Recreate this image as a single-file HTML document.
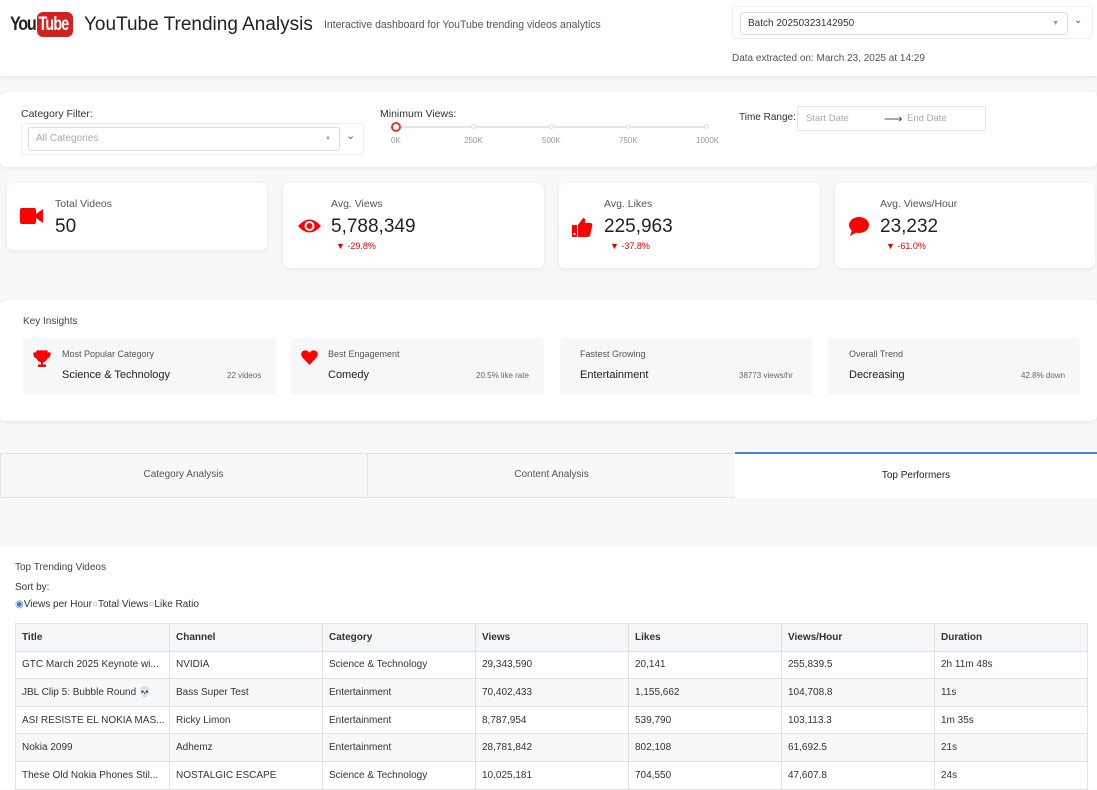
<!DOCTYPE html>
<html><head><meta charset="utf-8"><style>
*{box-sizing:border-box;margin:0;padding:0}
body{width:1097px;height:789px;overflow:hidden;background:#f8f8f8;font-family:"Liberation Sans",Arial,sans-serif;color:#333;position:relative}
.a{position:absolute}
.card{background:#fff;border-radius:6px;box-shadow:0 1px 4px rgba(0,0,0,.08)}
.lbl{font-size:10.5px;color:#555}
.big{font-size:19px;color:#222}
.dn{font-size:9px;color:#e00}
.ins{background:#f6f7f9;border-radius:3px}
table{border-collapse:collapse;font-size:10px;color:#333}
td,th{border:1px solid #e2e2e2;height:27.6px;padding:0 6px;text-align:left;font-weight:normal;white-space:nowrap;overflow:hidden}
th{background:#f5f6f8;font-weight:bold;color:#333}
</style></head><body>
<div class="a" style="left:0;top:0;width:1097px;height:76px;background:#fff;box-shadow:0 2px 4px rgba(0,0,0,.06)"></div>
<div class="a" style="left:10px;top:14px;font:bold 19px 'Liberation Sans',sans-serif;color:#222;letter-spacing:-1.5px;transform:scaleX(.85);transform-origin:left">You</div>
<div class="a" style="left:37px;top:12px;width:36px;height:25px;background:#d32020;border-radius:6px;overflow:hidden"><div style="color:#fff;font:bold 19px 'Liberation Sans',sans-serif;line-height:25px;letter-spacing:-1px;transform:scaleX(.75);transform-origin:left;padding-left:2px;white-space:nowrap">Tube</div></div>
<div class="a" style="left:84px;top:14px;font-size:19px;color:#222">YouTube Trending Analysis</div>
<div class="a" style="left:324px;top:19px;font-size:11px;color:#555;transform:scaleX(.95);transform-origin:left">Interactive dashboard for YouTube trending videos analytics</div>
<div class="a" style="left:732px;top:6px;width:361px;height:33px;border:1px solid #eee;border-radius:3px"></div>
<div class="a" style="left:740px;top:12px;width:328px;height:23px;border:1px solid #ddd;border-radius:3px;font-size:10px;line-height:21px;padding-left:7px;color:#333">Batch 20250323142950<span style="position:absolute;right:8px;color:#999;font-size:7px">▼</span></div>
<div class="a" style="left:1074px;top:15px;font-size:10px;color:#555">⌄</div>
<div class="a" style="left:732px;top:53px;font-size:10px;color:#555">Data extracted on: March 23, 2025 at 14:29</div>

<div class="a card" style="left:0;top:92px;width:1097px;height:75px;border-radius:6px"></div>
<div class="a" style="left:21px;top:108px;font-size:10.5px;color:#333">Category Filter:</div>
<div class="a" style="left:21px;top:123px;width:343px;height:32px;border:1px solid #eee;border-radius:3px"></div>
<div class="a" style="left:28px;top:127px;width:312px;height:24px;border:1px solid #ddd;border-radius:3px;font-size:10px;color:#aaa;line-height:22px;padding-left:7px">All Categories<span style="position:absolute;right:8px;font-size:6px;color:#999">▼</span></div>
<div class="a" style="left:346px;top:129px;font-size:11px;color:#555">⌄</div>
<div class="a" style="left:380px;top:108px;font-size:10.5px;color:#333">Minimum Views:</div>
<div class="a" style="left:396px;top:126px;width:311px;height:2px;background:#e6e6e6"></div>
<div class="a" style="left:391px;top:122px;width:10px;height:10px;border:2px solid #e33;border-radius:50%;background:#fff"></div>
<div class="a" style="left:471px;top:124px;width:5px;height:5px;border:1px solid #ddd;border-radius:50%;background:#fff"></div>
<div class="a" style="left:549px;top:124px;width:5px;height:5px;border:1px solid #ddd;border-radius:50%;background:#fff"></div>
<div class="a" style="left:626px;top:124px;width:5px;height:5px;border:1px solid #ddd;border-radius:50%;background:#fff"></div>
<div class="a" style="left:704px;top:124px;width:5px;height:5px;border:1px solid #ddd;border-radius:50%;background:#fff"></div>
<div class="a" style="left:391px;top:136px;font-size:8px;color:#999">0K</div>
<div class="a" style="left:464px;top:136px;font-size:8px;color:#999">250K</div>
<div class="a" style="left:542px;top:136px;font-size:8px;color:#999">500K</div>
<div class="a" style="left:619px;top:136px;font-size:8px;color:#999">750K</div>
<div class="a" style="left:696px;top:136px;font-size:8px;color:#999">1000K</div>
<div class="a" style="left:739px;top:112px;font-size:10px;color:#333">Time Range:</div>
<div class="a" style="left:797px;top:106px;width:189px;height:25px;border:1px solid #e4e4e4;border-radius:2px;font-size:9.5px;color:#aaa;line-height:23px;padding-left:8px;background:#fff">Start Date<span style="position:absolute;left:86px;color:#555;font-size:13px">⟶</span><span style="position:absolute;left:109px">End Date</span></div>

<div class="a card" style="left:7px;top:183px;width:260px;height:67px"></div>
<div class="a card" style="left:283px;top:183px;width:261px;height:85px"></div>
<div class="a card" style="left:559px;top:183px;width:261px;height:85px"></div>
<div class="a card" style="left:835px;top:183px;width:260px;height:85px"></div>
<svg class="a" style="left:20px;top:207px" width="23" height="18" viewBox="0 0 23 18"><rect x="0" y="1" width="16" height="16" rx="2" fill="#f00"/><path d="M16 7 L23 2 L23 16 L16 11Z" fill="#f00"/></svg>
<div class="a lbl" style="left:55px;top:198px">Total Videos</div>
<div class="a big" style="left:55px;top:216px">50</div>
<svg class="a" style="left:297px;top:217px" width="25" height="18" viewBox="0 0 25 18"><path d="M1 9 Q12.5 -4 24 9 Q12.5 22 1 9Z" fill="#f00"/><circle cx="12.5" cy="9" r="5" fill="#fff"/><circle cx="12.5" cy="9" r="3" fill="#f00"/></svg>
<div class="a lbl" style="left:331px;top:198px">Avg. Views</div>
<div class="a big" style="left:331px;top:216px">5,788,349</div>
<div class="a dn" style="left:336px;top:241px">▼ -29.8%</div>
<svg class="a" style="left:571px;top:216px" width="22" height="22" viewBox="0 0 22 22"><rect x="1" y="9" width="5" height="12" fill="#f00"/><path d="M7 9 L12 2 Q15 2 14 7 L20 7 Q22 8 21 11 L19 20 Q18 21 16 21 L7 21Z" fill="#f00"/><rect x="2.5" y="17" width="2" height="2" fill="#fff"/></svg>
<div class="a lbl" style="left:604px;top:198px">Avg. Likes</div>
<div class="a big" style="left:604px;top:216px">225,963</div>
<div class="a dn" style="left:610px;top:241px">▼ -37.8%</div>
<svg class="a" style="left:848px;top:216px" width="22" height="21" viewBox="0 0 22 21"><ellipse cx="11" cy="9" rx="10" ry="8" fill="#f00"/><path d="M4 14 L2 20 L9 16Z" fill="#f00"/></svg>
<div class="a lbl" style="left:880px;top:198px">Avg. Views/Hour</div>
<div class="a big" style="left:880px;top:216px">23,232</div>
<div class="a dn" style="left:886px;top:241px">▼ -61.0%</div>

<div class="a card" style="left:0;top:300px;width:1097px;height:121px;border-radius:6px"></div>
<div class="a" style="left:23px;top:316px;font-size:10px;color:#444">Key Insights</div>
<div class="a ins" style="left:23px;top:338px;width:253px;height:56px"></div>
<div class="a ins" style="left:291px;top:338px;width:253px;height:56px"></div>
<div class="a ins" style="left:560px;top:338px;width:252px;height:56px"></div>
<div class="a ins" style="left:828px;top:338px;width:252px;height:56px"></div>
<svg class="a" style="left:33px;top:350px" width="18" height="18" viewBox="0 0 18 18"><path d="M4 1H14V7Q14 11 9 12Q4 11 4 7Z M4 3H1Q1 8 5 8 M14 3H17Q17 8 13 8" fill="#f00" stroke="#f00" stroke-width="1.3"/><rect x="8" y="11" width="2" height="4" fill="#f00"/><rect x="5" y="14.5" width="8" height="2.5" fill="#f00"/></svg>
<div class="a" style="left:62px;top:349px;font-size:9px;color:#555">Most Popular Category</div>
<div class="a" style="left:62px;top:369px;font-size:11px;color:#222">Science &amp; Technology</div>
<div class="a" style="left:227px;top:371px;font-size:8px;color:#666">22 videos</div>
<svg class="a" style="left:301px;top:350px" width="17" height="15" viewBox="0 0 17 15"><path d="M8.5 15 L1 7 Q-1 3 2 1 Q6 -1 8.5 3 Q11 -1 15 1 Q18 3 16 7Z" fill="#f00"/></svg>
<div class="a" style="left:328px;top:349px;font-size:9px;color:#555">Best Engagement</div>
<div class="a" style="left:328px;top:369px;font-size:11px;color:#222">Comedy</div>
<div class="a" style="left:476px;top:371px;font-size:8px;color:#666">20.5% like rate</div>
<div class="a" style="left:580px;top:349px;font-size:9px;color:#555">Fastest Growing</div>
<div class="a" style="left:580px;top:369px;font-size:11px;color:#222">Entertainment</div>
<div class="a" style="left:739px;top:371px;font-size:8px;color:#666">38773 views/hr</div>
<div class="a" style="left:849px;top:349px;font-size:9px;color:#555">Overall Trend</div>
<div class="a" style="left:849px;top:369px;font-size:11px;color:#222">Decreasing</div>
<div class="a" style="left:1021px;top:371px;font-size:8px;color:#666">42.8% down</div>

<div class="a" style="left:0;top:453px;width:1097px;height:45px;border:1px solid #e4e4e4;background:#f8f8f8"></div>
<div class="a" style="left:367px;top:453px;width:1px;height:45px;background:#e4e4e4"></div>
<div class="a" style="left:735px;top:452px;width:362px;height:46px;background:#fff;border-top:2px solid #4a7fe0"></div>
<div class="a" style="left:0;top:469px;width:367px;text-align:center;font-size:10px;color:#555">Category Analysis</div>
<div class="a" style="left:368px;top:469px;width:367px;text-align:center;font-size:10px;color:#555">Content Analysis</div>
<div class="a" style="left:735px;top:470px;width:362px;text-align:center;font-size:10px;color:#222">Top Performers</div>

<div class="a" style="left:0;top:546px;width:1097px;height:243px;background:#fff"></div>
<div class="a" style="left:15px;top:562px;font-size:10px;color:#444">Top Trending Videos</div>
<div class="a" style="left:15px;top:582px;font-size:10px;color:#333">Sort by:</div>
<div class="a" style="left:15px;top:599px;font-size:10px;color:#333"><span style="color:#3a7bd5">◉</span>Views per Hour<span style="color:#999">○</span>Total Views<span style="color:#999">○</span>Like Ratio</div>
<table class="a" style="left:15px;top:623px;width:1073px;table-layout:fixed">
<tr><th style="width:154px">Title</th><th style="width:153px">Channel</th><th style="width:153px">Category</th><th style="width:153px">Views</th><th style="width:153px">Likes</th><th style="width:153px">Views/Hour</th><th>Duration</th></tr>
<tr><td>GTC March 2025 Keynote wi...</td><td>NVIDIA</td><td>Science &amp; Technology</td><td>29,343,590</td><td>20,141</td><td>255,839.5</td><td>2h 11m 48s</td></tr>
<tr style="background:#f7f8fa"><td>JBL Clip 5: Bubble Round 💀</td><td>Bass Super Test</td><td>Entertainment</td><td>70,402,433</td><td>1,155,662</td><td>104,708.8</td><td>11s</td></tr>
<tr><td>ASI RESISTE EL NOKIA MAS...</td><td>Ricky Limon</td><td>Entertainment</td><td>8,787,954</td><td>539,790</td><td>103,113.3</td><td>1m 35s</td></tr>
<tr style="background:#f7f8fa"><td>Nokia 2099</td><td>Adhemz</td><td>Entertainment</td><td>28,781,842</td><td>802,108</td><td>61,692.5</td><td>21s</td></tr>
<tr><td>These Old Nokia Phones Stil...</td><td>NOSTALGIC ESCAPE</td><td>Science &amp; Technology</td><td>10,025,181</td><td>704,550</td><td>47,607.8</td><td>24s</td></tr>
</table>
</body></html>
